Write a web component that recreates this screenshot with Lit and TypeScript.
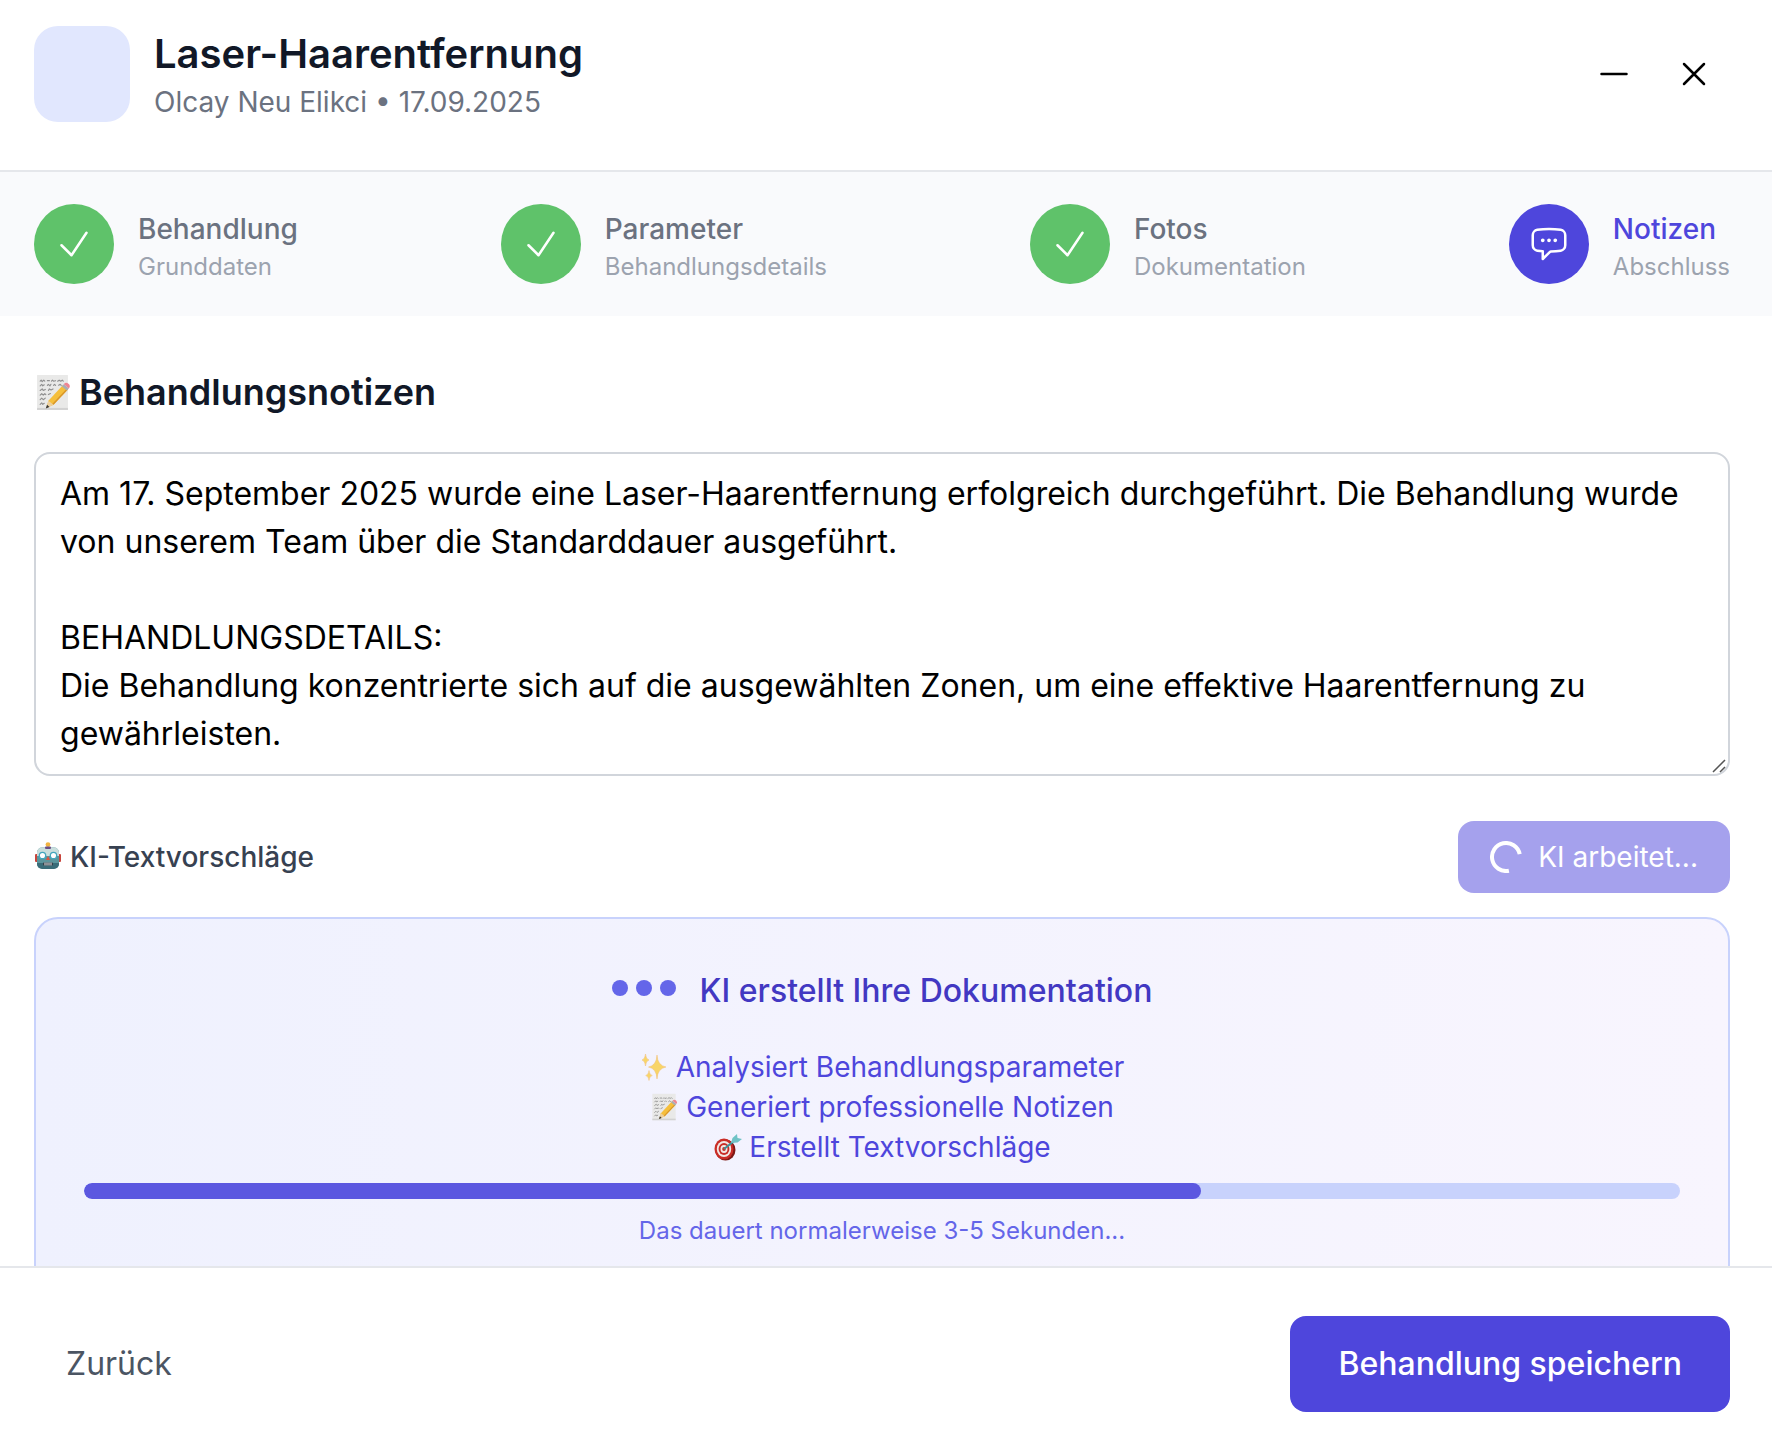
import { LitElement, html, css, svg } from "lit";
import { customElement, state } from "lit/decorators.js";

const memo = html`<svg class="emoji" viewBox="0 0 36 36" aria-hidden="true">
  <rect x="3" y="1" width="30" height="34" fill="#e9e9e8" />
  <rect x="3" y="33" width="30" height="2" fill="#d2d2d2" />
  <g stroke="#8f8f8f" stroke-width="1.1" fill="none" stroke-linecap="round" stroke-linejoin="round">
    <path d="M6 7l1-1 1 1.500 1.500-1.500 1 1M13 6.500h2M17 7l1-1 1 1 2-0.500M23 7l1.500-1 1.500 1 1.500-1 1 1" />
    <path d="M6 11.500l1.500-1.500 1 1.500 1.500-1M13 11l1-1 1.500 1.500 1-1.500M19 11l1-1 1 1M24 11l1.500-1 1 1" />
    <path d="M6 16l2-1.500 1 1.500 2-1M14 16l1-1.500 1.500 1 2-1" />
    <path d="M6 20.500l1.500-1.500 1.500 1.500 1.500-1.500 1 1M14 20l2-1" />
    <path d="M6 25l1.500-1.500 1.500 1.500 2-1.500M6 29.500l1.500-1.500 1 1.500 1.500-1" />
  </g>
  <path d="M12 33l2-7 14-15 5 4-14 15z" fill="#f5bf3c" />
  <path d="M17 30l15-16 1 1-14 15z" fill="#d9962a" />
  <path d="M12 33l2-7 5 4z" fill="#ecd0a0" />
  <path d="M11.500 33.500l1.200-3.500 2.300 2z" fill="#333" />
  <path d="M27 12l2-2 5 4-2 2z" fill="#a9adb3" />
  <path d="M29 10q2-2.500 4.500-0.500t0.500 4.500z" fill="#ee8591" />
</svg>`;

const robot = html`<svg class="emoji" viewBox="0 1 28 28" aria-hidden="true">
  <rect x="1" y="12" width="3" height="8" rx="1" fill="#c8453c" />
  <rect x="24" y="12" width="3" height="8" rx="1" fill="#c8453c" />
  <circle cx="14" cy="2.600" r="2.400" fill="#f2b441" />
  <rect x="3" y="5.500" width="22" height="21" rx="5" fill="#5b959c" />
  <path d="M3 14v-3.500a5 5 0 0 1 5-5h12a5 5 0 0 1 5 5V14z" fill="#c9dedd" />
  <path d="M3 21v1a5 5 0 0 0 5 5h12a5 5 0 0 0 5-5v-1z" fill="#396c78" />
  <rect x="11" y="4.500" width="6" height="2.500" rx="1" fill="#6b4f86" />
  <circle cx="8.500" cy="13.500" r="3.200" fill="#fff" stroke="#43a6bd" stroke-width="1.300" />
  <circle cx="19.500" cy="13.500" r="3.200" fill="#fff" stroke="#43a6bd" stroke-width="1.300" />
  <path d="M14 14l2 4h-4z" fill="#e0523f" />
  <rect x="9" y="20.500" width="10" height="3" rx="1" fill="#343d46" />
  <path d="M11 20.500v3M13 20.500v3M15 20.500v3M17 20.500v3" stroke="#e6e6e6" stroke-width="1" />
</svg>`;

const sparkles = html`<svg class="emoji" viewBox="0 0 28 28" aria-hidden="true">
  <g fill="#f8d568" stroke="#f0bd72" stroke-width="0.500">
    <path d="M17 2q0.500 10.500 9 12-8.500 1.500-9 12-0.500-10.500-8.500-12 8-1.500 8.500-12z" />
    <path d="M5.500 1q0.300 5 3.500 6-3.200 1-3.500 6-0.300-5-3.500-6 3.200-1 3.500-6z" />
    <path d="M9 17.500q0.300 4.200 3.300 5-3 0.800-3.300 5-0.300-4.200-3.300-5 3-0.800 3.300-5z" />
  </g>
</svg>`;

const target = html`<svg class="emoji" viewBox="0 0 28 28" aria-hidden="true">
  <ellipse cx="12.500" cy="17" rx="10" ry="10.500" fill="#7d1815" />
  <ellipse cx="11" cy="16" rx="9.500" ry="10.500" fill="#c92d27" />
  <ellipse cx="11" cy="16" rx="7.200" ry="8" fill="#f2e9e6" />
  <ellipse cx="11" cy="16" rx="5.400" ry="6" fill="#c92d27" />
  <ellipse cx="11" cy="16" rx="3.500" ry="4" fill="#f2e9e6" />
  <ellipse cx="11" cy="16" rx="1.800" ry="2" fill="#c92d27" />
  <path d="M11 16L23 6.500" stroke="#3f8f96" stroke-width="2" />
  <path d="M18 10l1.500-5L24 1l0.500 4L29 6l-4.500 3.500z" fill="#6fc3c6" />
</svg>`;

const checkPath = svg`<path d="m4.500 12.750 6 6 9-13.500" />`;
const chatPath = svg`<path d="M8.625 9.750a.375.375 0 1 1-.750 0 .375.375 0 0 1 .750 0Zm0 0H8.250m4.125 0a.375.375 0 1 1-.750 0 .375.375 0 0 1 .750 0Zm0 0H12m4.125 0a.375.375 0 1 1-.750 0 .375.375 0 0 1 .750 0Zm0 0h-.375m-13.500 3.010c0 1.600 1.123 2.994 2.707 3.227 1.087.160 2.185.283 3.293.369V21l4.184-4.183a1.140 1.140 0 0 1 .778-.332 48.294 48.294 0 0 0 5.830-.498c1.585-.233 2.708-1.626 2.708-3.228V6.741c0-1.602-1.123-2.995-2.707-3.228A48.394 48.394 0 0 0 12 3c-2.392 0-4.744.175-7.043.513C3.373 3.746 2.250 5.140 2.250 6.741v6.018Z" />`;

const icon = (path: unknown) => html`<svg
  class="icon"
  viewBox="0 0 24 24"
  fill="none"
  stroke="currentColor"
  stroke-width="1.5"
  stroke-linecap="round"
  stroke-linejoin="round"
  aria-hidden="true"
>${path}</svg>`;

interface Step {
  title: string;
  detail: string;
  current?: boolean;
}

const steps: Step[] = [
  { title: "Behandlung", detail: "Grunddaten" },
  { title: "Parameter", detail: "Behandlungsdetails" },
  { title: "Fotos", detail: "Dokumentation" },
  { title: "Notizen", detail: "Abschluss", current: true },
];

@customElement("app-root")
export class AppRoot extends LitElement {
  @state() private notes = `Am 17. September 2025 wurde eine Laser-Haarentfernung erfolgreich durchgeführt. Die Behandlung wurde von unserem Team über die Standarddauer ausgeführt.

BEHANDLUNGSDETAILS:
Die Behandlung konzentrierte sich auf die ausgewählten Zonen, um eine effektive Haarentfernung zu gewährleisten.`;

  @state() private progress = 70;

  static styles = css`
    :host {
      display: flex;
      flex-direction: column;
      height: 100vh;
      background: #fff;
      color: #111827;
      font-family: Inter, "Liberation Sans", sans-serif;
      font-size: 28px;
      line-height: 40px;
    }
    * {
      box-sizing: border-box;
    }
    h1,
    h2,
    h3,
    p,
    ul,
    ol {
      margin: 0;
      padding: 0;
      list-style: none;
    }
    button {
      border: 0;
      background: none;
      font: inherit;
      color: inherit;
      cursor: pointer;
    }
    .icon {
      display: block;
      width: 40px;
      height: 40px;
    }
    .header {
      display: flex;
      align-items: flex-start;
      gap: 24px;
      padding: 26px 42px 48px 34px;
      border-bottom: 2px solid #e5e7eb;
    }
    .avatar {
      width: 96px;
      height: 96px;
      border-radius: 24px;
      background: #e1e7fe;
    }
    .heading {
      flex: 1;
    }
    .title {
      font-size: 40px;
      line-height: 56px;
      font-weight: 600;
    }
    .subtitle {
      color: #6b7280;
    }
    .window-actions {
      display: flex;
      align-self: center;
      gap: 8px;
    }
    .window-button {
      padding: 16px;
      color: #000;
    }
    .steps {
      display: flex;
      justify-content: space-between;
      padding: 32px 42px 32px 34px;
      background: #f9fafc;
    }
    .step {
      display: flex;
      gap: 24px;
    }
    .step-badge {
      display: grid;
      place-items: center;
      width: 80px;
      height: 80px;
      border-radius: 50%;
      background: #5fc26a;
      color: #fff;
    }
    .step-text {
      padding-top: 4px;
    }
    .step-title {
      line-height: 42px;
      font-weight: 500;
      color: #6b7280;
    }
    .step-detail {
      font-size: 24px;
      line-height: 34px;
      color: #9ca3af;
    }
    .current .step-badge {
      background: #4e46dc;
    }
    .current .step-title {
      color: #4e46dc;
    }
    .content {
      flex: 1;
      min-height: 0;
      overflow-y: auto;
      scrollbar-width: none;
      padding: 48px 42px 0 34px;
    }
    .with-emoji {
      display: flex;
      align-items: center;
      gap: 8px;
    }
    .emoji {
      flex: none;
      width: 28px;
      height: 28px;
      overflow: visible;
    }
    .section-title {
      margin-bottom: 32px;
      font-size: 36px;
      line-height: 56px;
      font-weight: 600;
    }
    .section-title .emoji {
      width: 37px;
      height: 37px;
    }
    .notes {
      position: relative;
    }
    .notes-input {
      display: block;
      width: 100%;
      padding: 16px 24px;
      border: 2px solid #d1d5db;
      border-radius: 16px;
      background: #fff;
      color: #000;
      font: inherit;
      font-size: 32px;
      line-height: 48px;
      resize: none;
      overflow: hidden;
      outline: none;
    }
    .grip {
      position: absolute;
      right: 2px;
      bottom: 2px;
      width: 16px;
      height: 16px;
      pointer-events: none;
    }
    .assist {
      display: flex;
      align-items: center;
      justify-content: space-between;
      margin: 45px 0 24px;
    }
    .assist-label {
      font-size: 28px;
      font-weight: 500;
      color: #374151;
    }
    .assist-button {
      display: flex;
      align-items: center;
      gap: 16px;
      padding: 16px 32px;
      border-radius: 16px;
      background: #4e46dc;
      color: #fff;
      opacity: 0.5;
      cursor: default;
    }
    .spinner {
      width: 32px;
      height: 32px;
    }
    .panel {
      padding: 48px;
      border: 2px solid #c8d2fc;
      border-radius: 24px;
      background: linear-gradient(to right, #eff1fe, #f8f5fe);
      text-align: center;
    }
    .panel-head {
      display: flex;
      align-items: center;
      justify-content: center;
      gap: 24px;
      margin-bottom: 32px;
    }
    .dots {
      display: flex;
      gap: 8px;
      padding-bottom: 6px;
    }
    .dot {
      width: 16px;
      height: 16px;
      border-radius: 50%;
      background: #6466e9;
    }
    .panel-title {
      font-size: 32px;
      line-height: 48px;
      font-weight: 500;
      color: #4238c2;
    }
    .task {
      justify-content: center;
      color: #4e46dc;
    }
    .track {
      height: 16px;
      margin: 16px 0;
      border-radius: 8px;
      background: #c8d2fc;
      overflow: hidden;
    }
    .fill {
      height: 100%;
      border-radius: 8px;
      background: #5b57e0;
    }
    .hint {
      font-size: 24px;
      line-height: 32px;
      color: #6466e9;
    }
    .footer {
      display: flex;
      align-items: center;
      justify-content: space-between;
      padding: 48px 42px 38px 34px;
      border-top: 2px solid #e5e7eb;
      font-size: 32px;
      line-height: 48px;
    }
    .back {
      padding: 24px 32px;
      color: #4b5563;
    }
    .save {
      padding: 24px 48px;
      border-radius: 16px;
      background: #4e46dc;
      color: #fff;
      font-weight: 500;
    }
  `;

  private onInput(e: Event) {
    this.notes = (e.target as HTMLTextAreaElement).value;
  }

  render() {
    return html`
      <header class="header">
        <div class="avatar"></div>
        <div class="heading">
          <h1 class="title">Laser-Haarentfernung</h1>
          <p class="subtitle">Olcay Neu Elikci • 17.09.2025</p>
        </div>
        <div class="window-actions">
          <button class="window-button" type="button" aria-label="Minimieren">
            ${icon(svg`<path d="M19.500 12h-15" />`)}
          </button>
          <button class="window-button" type="button" aria-label="Schließen">
            ${icon(svg`<path d="M6 18 18 6M6 6l12 12" />`)}
          </button>
        </div>
      </header>

      <ol class="steps">
        ${steps.map(
          (s) => html`<li class="step ${s.current ? "current" : ""}">
            <span class="step-badge">${icon(s.current ? chatPath : checkPath)}</span>
            <div class="step-text">
              <p class="step-title">${s.title}</p>
              <p class="step-detail">${s.detail}</p>
            </div>
          </li>`
        )}
      </ol>

      <main class="content">
        <h2 class="section-title">
          <label class="with-emoji" for="notes">${memo}Behandlungsnotizen</label>
        </h2>
        <div class="notes">
          <textarea
            id="notes"
            class="notes-input"
            rows="6"
            spellcheck="false"
            .value=${this.notes}
            @input=${this.onInput}
          ></textarea>
          <svg class="grip" viewBox="0 0 16 16" stroke="#555" stroke-width="1.5" aria-hidden="true">
            <path d="M1 14L13 2M8 14l5-5" />
          </svg>
        </div>

        <div class="assist">
          <h3 class="assist-label with-emoji">${robot}KI-Textvorschläge</h3>
          <button class="assist-button" type="button" disabled>
            <svg class="spinner" viewBox="0 0 32 32" fill="none" stroke="#fff" stroke-width="4" aria-hidden="true">
              <path d="M18.900 29.700A14 14 0 1 1 29.700 13.100" />
            </svg>
            KI arbeitet...
          </button>
        </div>

        <section class="panel">
          <div class="panel-head">
            <div class="dots"><span class="dot"></span><span class="dot"></span><span class="dot"></span></div>
            <h3 class="panel-title">KI erstellt Ihre Dokumentation</h3>
          </div>
          <ul>
            <li class="task with-emoji">${sparkles}Analysiert Behandlungsparameter</li>
            <li class="task with-emoji">${memo}Generiert professionelle Notizen</li>
            <li class="task with-emoji">${target}Erstellt Textvorschläge</li>
          </ul>
          <div class="track" role="progressbar" aria-valuenow=${this.progress}>
            <div class="fill" style="width:${this.progress}%"></div>
          </div>
          <p class="hint">Das dauert normalerweise 3-5 Sekunden...</p>
        </section>
      </main>

      <footer class="footer">
        <button class="back" type="button">Zurück</button>
        <button class="save" type="button">Behandlung speichern</button>
      </footer>
    `;
  }
}
